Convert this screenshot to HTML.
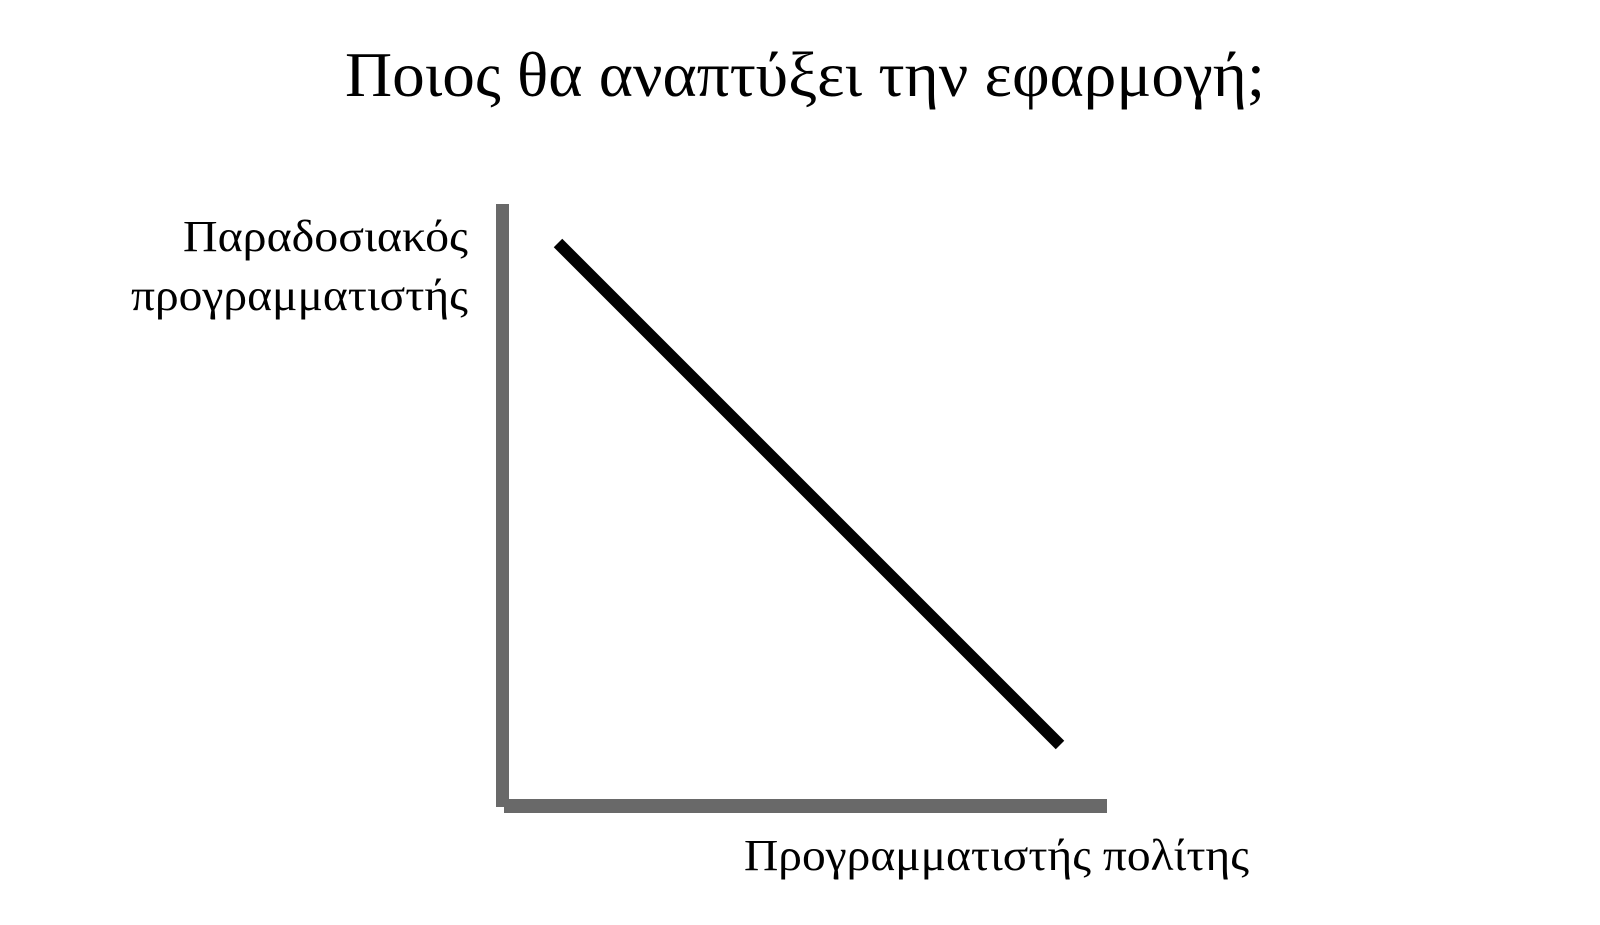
<!DOCTYPE html>
<html><head><meta charset="utf-8"><style>html,body{margin:0;padding:0;background:#fff;width:1600px;height:925px;overflow:hidden}</style></head>
<body>
<svg width="1600" height="925" xmlns="http://www.w3.org/2000/svg" style="display:block">
<g font-family="Liberation Serif, DejaVu Serif, serif" fill="#000">
<text x="345" y="96" font-size="64" textLength="920" lengthAdjust="spacingAndGlyphs">Ποιος θα αναπτύξει την εφαρμογή;</text>
<text x="468" y="251" font-size="44" text-anchor="end" textLength="285" lengthAdjust="spacingAndGlyphs">Παραδοσιακός</text>
<text x="468" y="310" font-size="44" text-anchor="end" textLength="337" lengthAdjust="spacingAndGlyphs">προγραμματιστής</text>
<text x="744" y="870" font-size="44" textLength="505" lengthAdjust="spacingAndGlyphs">Προγραμματιστής πολίτης</text>
</g>
<rect x="496" y="204" width="13" height="603" fill="#696969"/>
<rect x="504" y="799" width="603" height="14" fill="#696969"/>
<line x1="558" y1="243" x2="1060" y2="745" stroke="#000" stroke-width="12"/>
</svg>
</body></html>
